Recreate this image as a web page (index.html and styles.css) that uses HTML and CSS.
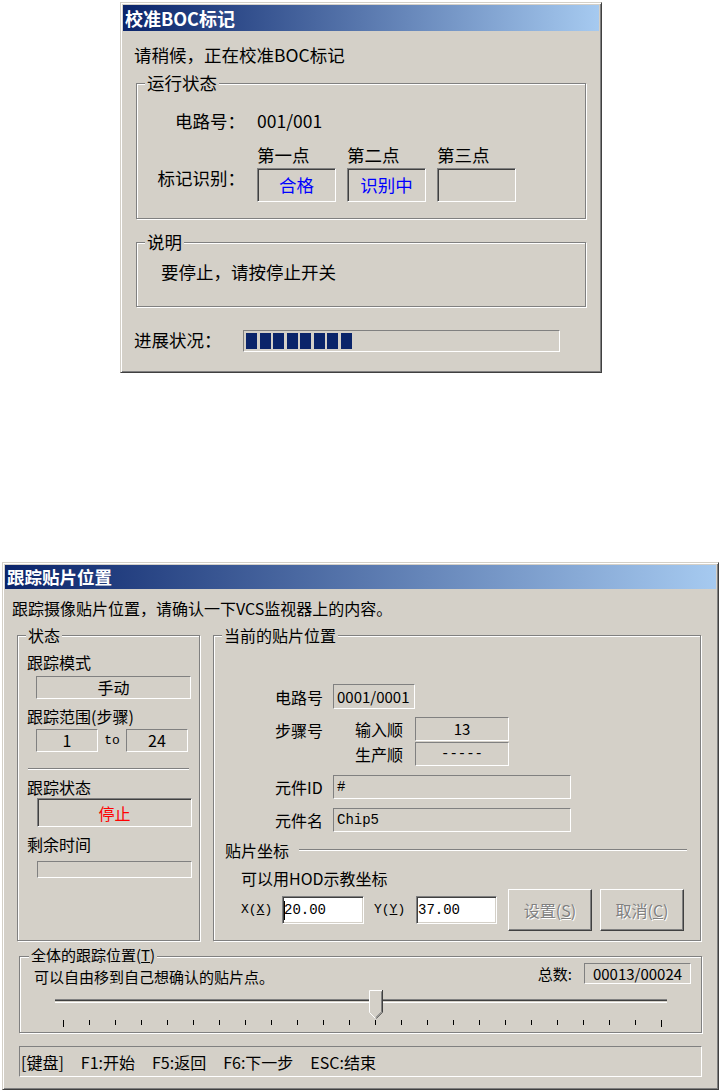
FILE: index.html
```html
<!DOCTYPE html>
<html lang="zh-CN">
<head>
    <meta charset="UTF-8">
    <title>校准BOC标记 / 跟踪贴片位置</title>
    <link rel="stylesheet" href="styles.css">
</head>
<body>
<!-- 校准BOC标记 -->
<div class="win win-boc">
    <div class="caption">校准BOC标记</div>
    <div class="boc-body">
        <div class="line">请稍候，正在校准BOC标记</div>
        <div class="group boc-run">
            <div class="group-title">运行状态</div>
            <div class="run-row run-circuit">
                <span class="run-lbl">电路号：</span><span>001/001</span>
            </div>
            <div class="run-row run-head">
                <span>第一点</span><span>第二点</span><span>第三点</span>
            </div>
            <div class="run-row run-marks">
                <span class="run-lbl">标记识别：</span>
                <span class="sunk mark">合格</span>
                <span class="sunk mark">识别中</span>
                <span class="sunk mark"></span>
            </div>
        </div>
        <div class="group boc-note">
            <div class="group-title">说明</div>
            <div class="note-text">要停止，请按停止开关</div>
        </div>
        <div class="progress-row">
            <span class="progress-lbl">进展状况：</span>
            <div class="progress">
                <i></i><i></i><i></i><i></i><i></i><i></i><i></i><i></i>
            </div>
        </div>
    </div>
</div>

<!-- 跟踪贴片位置 -->
<div class="win win-track">
    <div class="caption">跟踪贴片位置</div>
    <div class="track-body">
        <div class="line">跟踪摄像贴片位置，请确认一下VCS监视器上的内容。</div>
        <div class="track-groups">
            <div class="group status">
                <div class="group-title">状态</div>
                <div class="st-lbl">跟踪模式</div>
                <div class="flat st-box">手动</div>
                <div class="st-lbl">跟踪范围(步骤)</div>
                <div class="st-range">
                    <span class="flat">1</span><span class="st-to">to</span><span class="flat">24</span>
                </div>
                <div class="etch"></div>
                <div class="st-lbl">跟踪状态</div>
                <div class="sunk st-state">停止</div>
                <div class="st-lbl">剩余时间</div>
                <div class="flat st-time"></div>
            </div>
            <div class="group current">
                <div class="group-title">当前的贴片位置</div>
                <div class="cur-row cur-circuit">
                    <span class="cur-lbl">电路号</span><span class="flat cur-val">0001/0001</span>
                </div>
                <div class="cur-step">
                    <span class="cur-lbl">步骤号</span>
                    <div class="cur-sub">
                        <div class="cur-row"><span class="sub-lbl">输入顺</span><span class="flat sub-val">13</span></div>
                        <div class="cur-row"><span class="sub-lbl">生产顺</span><span class="flat sub-val mono">-----</span></div>
                    </div>
                </div>
                <div class="cur-row cur-gap"><span class="cur-lbl">元件ID</span><span class="flat cur-wide mono">#</span></div>
                <div class="cur-row cur-gap"><span class="cur-lbl">元件名</span><span class="flat cur-wide mono">Chip5</span></div>
                <div class="sub-head"><span>贴片坐标</span><i></i></div>
                <div class="cur-hint">可以用HOD示教坐标</div>
                <div class="coord-row">
                    <span class="coord-lbl">X(<u>X</u>)</span><span class="edit caret">20.00</span>
                    <span class="coord-lbl coord-y">Y(<u>Y</u>)</span><span class="edit edit-y">37.00</span>
                    <span class="btn btn-set">设置(<u>S</u>)</span><span class="btn">取消(<u>C</u>)</span>
                </div>
            </div>
        </div>
        <div class="group tracker">
            <div class="group-title">全体的跟踪位置(<u>T</u>)</div>
            <div class="tr-row">
                <span class="tr-hint">可以自由移到自己想确认的贴片点。</span>
                <span class="tr-lbl">总数:</span>
                <span class="flat tr-total">00013/00024</span>
            </div>
            <svg class="slider" width="681" height="47" viewBox="0 0 681 47">
                <rect x="35" y="15" width="612" height="1" fill="#808080"/>
                <rect x="35" y="16" width="612" height="1" fill="#404040"/>
                <rect x="35" y="17" width="612" height="1" fill="#d4d0c8"/>
                <rect x="35" y="18" width="612" height="1" fill="#fff"/>
                <path d="M349 6h14v22l-7 7l-7-7z" fill="#d4d0c8"/>
                <path d="M349.5 28.5v-22h13" fill="none" stroke="#fff"/>
                <path d="M349.5 28.5l6.5 6.5" fill="none" stroke="#fff"/>
                <path d="M362.5 6v22.2l-6.5 6.5" fill="none" stroke="#404040"/>
                <path d="M361.5 7.5v20.3l-5.5 5.5" fill="none" stroke="#808080"/>
                <path d="M43.5 36v7M69.5 36v5M95.5 36v5M121.5 36v5M147.5 36v5M173.5 36v5M199.5 36v5M225.5 36v5M251.5 36v5M277.5 36v5M303.5 36v5M329.5 36v5M355.5 36v5M381.5 36v5M407.5 36v5M433.5 36v5M459.5 36v5M485.5 36v5M511.5 36v5M537.5 36v5M563.5 36v5M589.5 36v5M615.5 36v5M641.5 36v7" stroke="#000"/>
            </svg>
        </div>
        <div class="flat keys">
            <span>[键盘]</span><span>F1:开始</span><span>F5:返回</span><span>F6:下一步</span><span>ESC:结束</span>
        </div>
    </div>
</div>
</body>
</html>
```

FILE: styles.css
```css
body {margin: 0; background: #fff; color: #000; font-family: "Noto Sans CJK SC", sans-serif; font-size: 16px; line-height: 20px;}

/* window frame */
.win {box-sizing: border-box; display: flex; flex-direction: column; padding: 2px; background: #d4d0c8;
    border: 1px solid; border-color: #d4d0c8 #404040 #404040 #d4d0c8;
    box-shadow: inset 1px 1px #fff, inset -1px -1px #808080;}
.caption {flex: none; padding-left: 2px; color: #fff; font-weight: bold;
    background: linear-gradient(to right, #0a246a, #a6caf0);}
.line {line-height: 20px;}
.mono {font-family: "Liberation Mono", monospace; font-size: 14px;}

/* group box, etched */
.group {box-sizing: border-box; border: 1px solid #808080; box-shadow: inset 1px 1px #fff, 1px 1px #fff;}
.group-title {width: fit-content; margin: -11px 0 0 8px; padding: 0 2px; background: #d4d0c8; line-height: 20px;}

/* edges */
.flat {box-sizing: border-box; border: 1px solid; border-color: #808080 #fff #fff #808080;}
.sunk {box-sizing: border-box; border: 1px solid; border-color: #808080 #fff #fff #808080;
    box-shadow: inset 1px 1px #404040, inset -1px -1px #d4d0c8;}

/* ---- 校准BOC标记 ---- */
.win-boc {width: 482px; height: 371px; margin: 2px 0 0 120px;}
.win-boc .caption {height: 26px; line-height: 26px; font-size: 18px;}
.boc-body {padding: 14px 0 0 11px; font-size: 17.5px;}
.boc-run {width: 450px; margin: 18px 0 0 2px; padding-bottom: 16px;}
.run-row {display: flex;}
.run-lbl {width: 108px; margin-right: 12px; text-align: right;}
.run-circuit {margin-top: 18px;}
.run-head {margin-top: 14px; padding-left: 120px; gap: 11px;}
.run-head span {width: 79px;}
.run-marks {margin-top: 3px; gap: 11px; align-items: flex-start;}
.run-marks .run-lbl {margin-right: 1px;}
.mark {width: 79px; height: 34px; display: flex; align-items: center; justify-content: center; color: #0000ff;}
.boc-note {width: 450px; margin: 23px 0 0 2px; padding-bottom: 24px;}
.note-text {margin: 10px 0 0 24px;}
.progress-row {display: flex; margin-top: 23px;}
.progress-lbl {width: 109px;}
.progress {box-sizing: border-box; display: flex; gap: 2.5px; width: 317px; height: 22px; padding: 2px;
    border: 1px solid; border-color: #808080 #fff #fff #808080;}
.progress i {width: 11px; height: 16px; background: #0a246a;}

/* ---- 跟踪贴片位置 ---- */
.win-track {width: 717px; height: 528px; margin: 189px 0 0 2px;}
.win-track .caption {height: 24px; line-height: 24px; font-size: 17.5px;}
.track-body {padding: 9px 0 0 7px;}
.track-groups {display: flex; gap: 13px; margin: 17px 0 0 5px;}

.status {width: 183px; height: 306px;}
.st-lbl {margin: 7px 0 0 9px;}
.st-box {width: 155px; height: 23px; margin: 4px 0 0 18px; text-align: center; line-height: 21px;}
.st-range {display: flex; margin: 3px 0 0 18px;}
.st-range .flat {width: 62px; height: 23px; text-align: center; line-height: 21px;}
.st-to {width: 28px; text-align: center; font-family: "Liberation Mono", monospace; font-size: 13px; line-height: 23px;}
.etch {width: 161px; height: 1px; margin: 16px 0 1px 10px; border-top: 1px solid #808080; background: #fff;}
.st-state {width: 155px; height: 29px; margin: 1px 0 0 19px; color: #ff0000;
    display: flex; align-items: center; justify-content: center;}
.st-time {width: 155px; height: 17px; margin: 7px 0 0 19px;}

.current {width: 488px; height: 306px;}
.cur-row {display: flex; align-items: center;}
.cur-lbl {width: 58px; margin-left: 61px; flex: none;}
.cur-circuit {margin-top: 39px;}
.cur-val {width: 82px; height: 25px; padding-left: 3px; font-size: 15px; line-height: 23px;}
.cur-step {display: flex; align-items: flex-start; margin-top: 8px;}
.cur-step .cur-lbl {margin-top: 3px;}
.cur-sub {margin-left: 22px; display: flex; flex-direction: column; gap: 1px;}
.sub-lbl {width: 60px;}
.sub-val {width: 94px; height: 24px; text-align: center; font-size: 15px; line-height: 22px;}
.sub-val.mono {font-size: 14px;}
.cur-gap {margin-top: 9px;}
.cur-wide {width: 238px; height: 24px; padding-left: 3px; line-height: 22px;}
.sub-head {display: flex; align-items: center; margin-top: 8px; padding-left: 11px;}
.sub-head i {flex: 1; height: 1px; margin: 0 13px 0 10px; border-top: 1px solid #808080; background: #fff;}
.cur-hint {margin: 8px 0 0 27px;}
.coord-row {display: flex; align-items: center; margin-top: 1px; padding-left: 27px;}
.coord-lbl {width: 41px; font-family: "Liberation Mono", monospace; font-size: 13px;}
.coord-y {width: 42px; margin-left: 10px;}
.edit {box-sizing: border-box; display: flex; align-items: center; width: 82px; height: 28px; padding-left: 1px;
    background: #fff; font-family: "Liberation Mono", monospace; font-size: 14px;
    border: 1px solid; border-color: #808080 #fff #fff #808080;
    box-shadow: inset 1px 1px #404040, inset -1px -1px #d4d0c8;}
.edit-y {width: 81px;}
.caret::before {content: ""; width: 1px; height: 19px; margin-right: -1px; background: #000;}
.btn {box-sizing: border-box; display: flex; align-items: center; justify-content: center;
    width: 84px; height: 42px; margin-left: 8px; color: #808080; text-shadow: 1px 1px #fff;
    border: 1px solid; border-color: #fff #404040 #404040 #fff; box-shadow: inset -1px -1px #808080;}
.btn-set {margin-left: 11px;}

.tracker {width: 683px; height: 77px; margin: 15px 0 0 7px;}
.tracker .group-title {margin: -10px 0 0 9px; font-size: 15px; line-height: 16px;}
.tr-row {display: flex; align-items: center; height: 21px; padding: 0 10px 0 14px; font-size: 15px;}
.tr-hint {flex: 1; margin-top: 6px;}
.tr-lbl {margin-right: 12px;}
.tr-total {width: 107px; height: 21px; text-align: center; line-height: 19px;}
.slider {display: block;}

.keys {display: flex; align-items: center; gap: 17px; width: 683px; height: 31px; margin: 13px 0 0 7px; padding-left: 1px;}
```
